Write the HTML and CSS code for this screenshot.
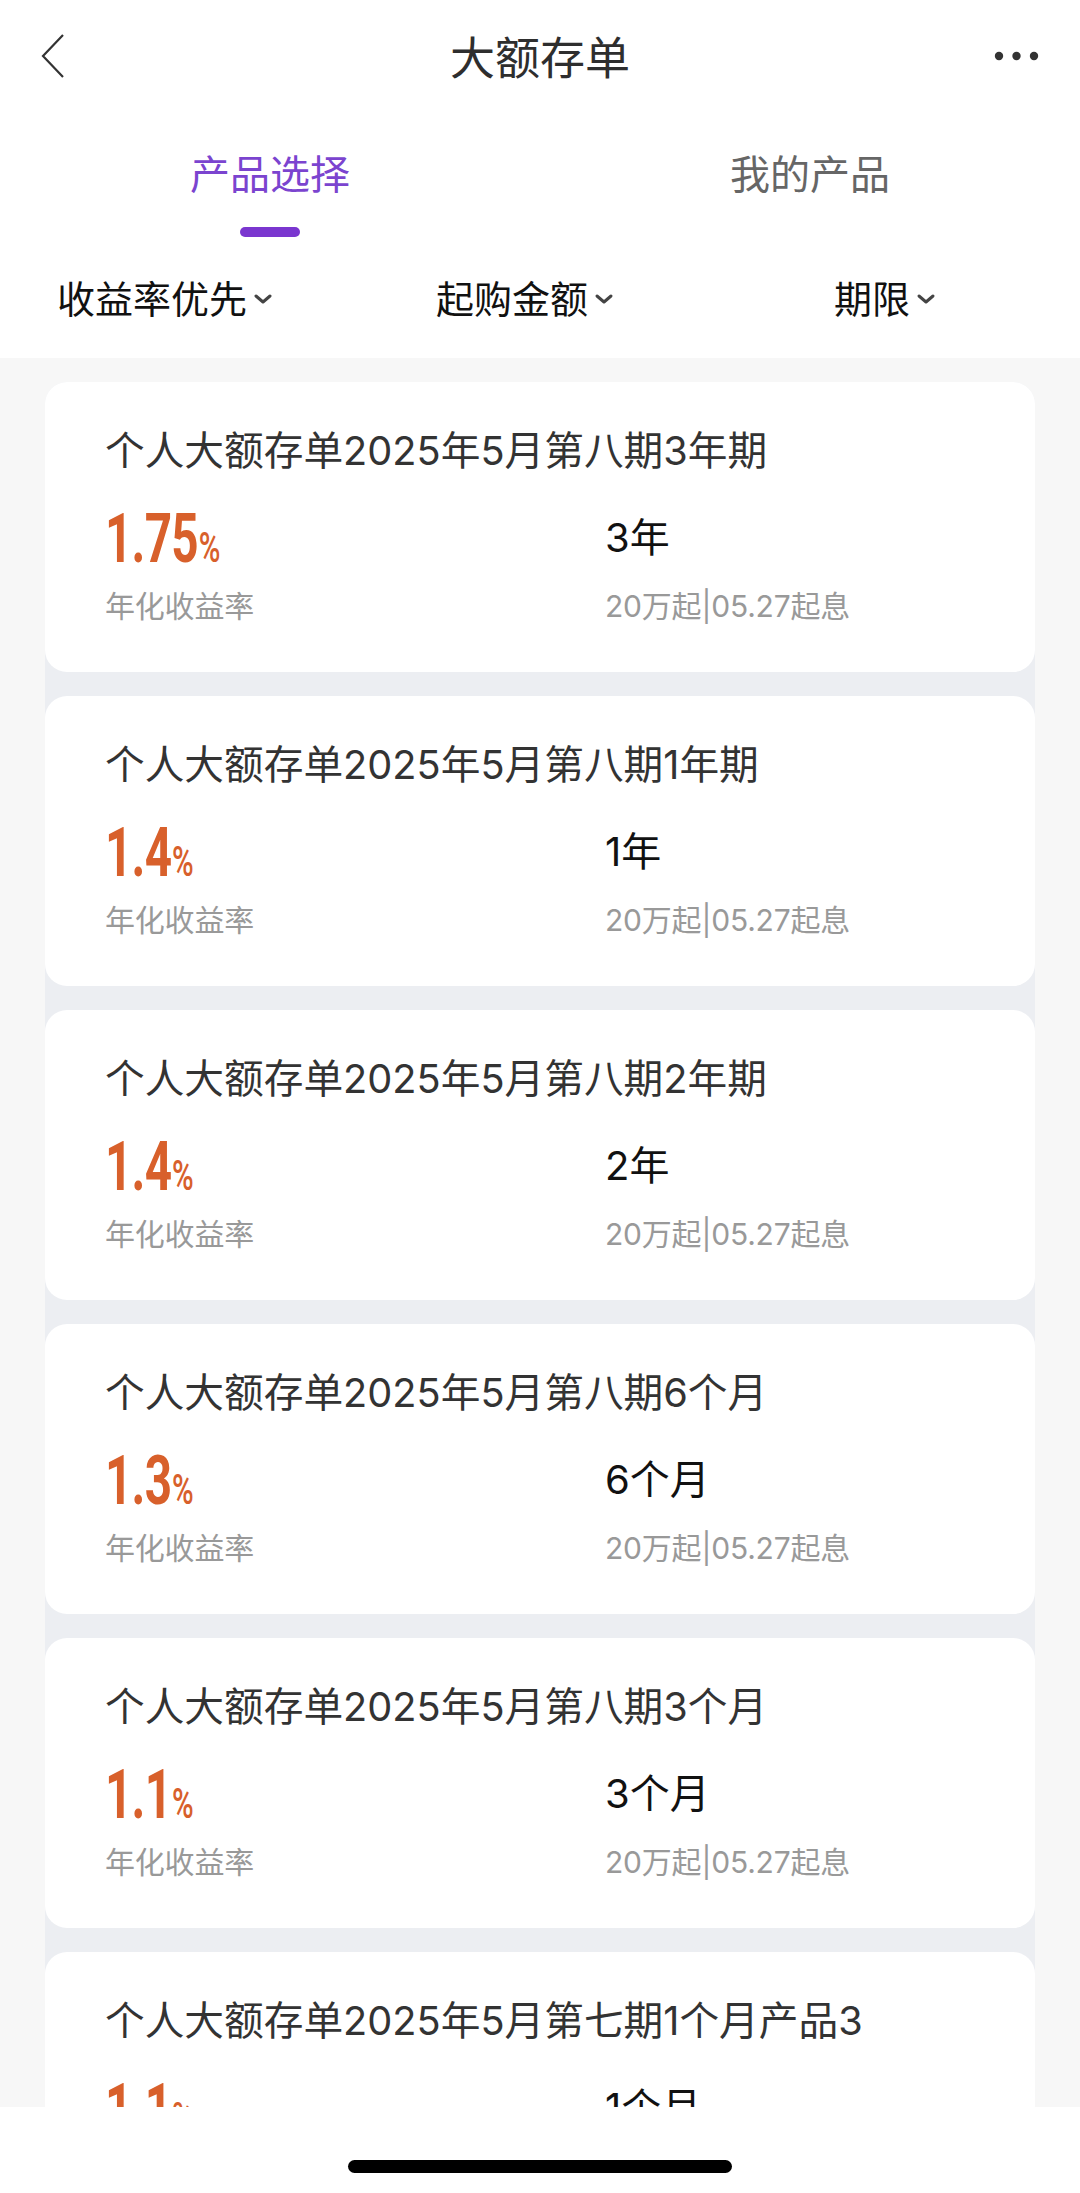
FILE: index.html
```html
<!DOCTYPE html>
<html lang="zh-CN">
<head>
<meta charset="utf-8">
<title>大额存单</title>
<link rel="stylesheet" href="styles.css">
</head>
<body>
<div class="screen">
  <div class="top">
    <div class="nav">
      <div class="nav-left">
        <svg class="back" width="24" height="46" viewBox="0 0 24 46"><polyline points="22,2 2,23 22,44" fill="none" stroke="#333" stroke-width="2.2" stroke-linejoin="miter"/></svg>
      </div>
      <div class="nav-title">大额存单</div>
      <div class="nav-right">
        <svg width="46" height="10" viewBox="0 0 46 10"><circle cx="5" cy="5" r="4.2" fill="#333"/><circle cx="22.5" cy="5" r="4.2" fill="#333"/><circle cx="40" cy="5" r="4.2" fill="#333"/></svg>
      </div>
    </div>
    <div class="tabs">
      <div class="tab active"><span class="tab-text">产品选择</span><span class="tab-bar"></span></div>
      <div class="tab"><span class="tab-text">我的产品</span><span class="tab-bar"></span></div>
    </div>
    <div class="filters">
      <div class="filter"><span>收益率优先</span><svg class="caret" width="20" height="12" viewBox="0 0 20 12"><polyline points="3,3 10,9 17,3" fill="none" stroke="#444" stroke-width="3" stroke-linecap="round" stroke-linejoin="round"/></svg></div>
      <div class="filter"><span>起购金额</span><svg class="caret" width="20" height="12" viewBox="0 0 20 12"><polyline points="3,3 10,9 17,3" fill="none" stroke="#444" stroke-width="3" stroke-linecap="round" stroke-linejoin="round"/></svg></div>
      <div class="filter"><span>期限</span><svg class="caret" width="20" height="12" viewBox="0 0 20 12"><polyline points="3,3 10,9 17,3" fill="none" stroke="#444" stroke-width="3" stroke-linecap="round" stroke-linejoin="round"/></svg></div>
    </div>
  </div>

  <div class="list">
    <div class="card">
      <div class="card-title">个人大额存单2025年5月第八期3年期</div>
      <div class="card-grid">
        <div class="rate"><span class="rate-num">1.75<small>%</small></span></div>
        <div class="term">3年</div>
        <div class="label">年化收益率</div>
        <div class="label">20万起|05.27起息</div>
      </div>
    </div>
    <div class="card">
      <div class="card-title">个人大额存单2025年5月第八期1年期</div>
      <div class="card-grid">
        <div class="rate"><span class="rate-num">1.4<small>%</small></span></div>
        <div class="term">1年</div>
        <div class="label">年化收益率</div>
        <div class="label">20万起|05.27起息</div>
      </div>
    </div>
    <div class="card">
      <div class="card-title">个人大额存单2025年5月第八期2年期</div>
      <div class="card-grid">
        <div class="rate"><span class="rate-num">1.4<small>%</small></span></div>
        <div class="term">2年</div>
        <div class="label">年化收益率</div>
        <div class="label">20万起|05.27起息</div>
      </div>
    </div>
    <div class="card">
      <div class="card-title">个人大额存单2025年5月第八期6个月</div>
      <div class="card-grid">
        <div class="rate"><span class="rate-num">1.3<small>%</small></span></div>
        <div class="term">6个月</div>
        <div class="label">年化收益率</div>
        <div class="label">20万起|05.27起息</div>
      </div>
    </div>
    <div class="card">
      <div class="card-title">个人大额存单2025年5月第八期3个月</div>
      <div class="card-grid">
        <div class="rate"><span class="rate-num">1.1<small>%</small></span></div>
        <div class="term">3个月</div>
        <div class="label">年化收益率</div>
        <div class="label">20万起|05.27起息</div>
      </div>
    </div>
    <div class="card">
      <div class="card-title">个人大额存单2025年5月第七期1个月产品3</div>
      <div class="card-grid">
        <div class="rate"><span class="rate-num">1.1<small>%</small></span></div>
        <div class="term">1个月</div>
        <div class="label">年化收益率</div>
        <div class="label">20万起|05.27起息</div>
      </div>
    </div>
  </div>

  <div class="home-bar"><span class="home-indicator"></span></div>
</div>
</body>
</html>
```

FILE: styles.css
```css
* { box-sizing: border-box; }
html, body { margin: 0; padding: 0; }
body {
  font-family: "Inter", "Noto Sans CJK SC", sans-serif;
  background: #f7f7f7;
  color: #333;
}
.screen {
  position: relative;
  width: 1080px;
  height: 2193px;
  overflow: hidden;
  background: #f7f7f7;
}
.top { background: #fff; }

.nav {
  height: 112px;
  display: grid;
  grid-template-columns: 1fr auto 1fr;
  align-items: center;
}
.nav-left { padding-left: 41px; display: flex; align-items: center; }
.nav-right { padding-right: 40px; display: flex; justify-content: flex-end; align-items: center; }
.nav-title {
  font-size: 45px;
  line-height: 56px;
  color: #2e2e2e;
  font-family: "Noto Sans CJK SC", sans-serif;
}

.tabs {
  display: grid;
  grid-template-columns: 1fr 1fr;
  padding-top: 36px;
}
.tab {
  display: flex;
  flex-direction: column;
  align-items: center;
}
.tab-text {
  font-size: 40px;
  line-height: 48px;
  color: #666;
  font-family: "Noto Sans CJK SC", sans-serif;
}
.tab-bar {
  width: 60px;
  height: 10px;
  border-radius: 5px;
  margin-top: 31px;
  background: transparent;
}
.tab.active .tab-text { color: #7b44cf; }
.tab.active .tab-bar { background: #7a36cf; }

.filters {
  display: grid;
  grid-template-columns: 1fr 1fr 1fr;
  padding-top: 37px;
  padding-bottom: 38px;
}
.filter {
  display: flex;
  justify-content: center;
  align-items: center;
  padding-right: 30px;
  font-size: 38px;
  line-height: 46px;
  color: #111;
  font-family: "Noto Sans CJK SC", sans-serif;
}
.caret { margin-left: 6px; margin-top: 4px; }

.list {
  margin: 24px 45px 0;
  background: #eceef2;
  border-radius: 22px;
  display: flex;
  flex-direction: column;
  gap: 24px;
}
.card {
  background: #fff;
  border-radius: 22px;
  height: 290px;
  padding: 45px 60px 0;
}
.card-title {
  font-size: 39.7px;
  line-height: 48px;
  color: #333;
  white-space: nowrap;
}
.card-grid {
  margin-top: 30px;
  display: grid;
  grid-template-columns: 500px 1fr;
  grid-template-rows: 68px 36px;
  row-gap: 15px;
  align-items: center;
}
.rate {
  height: 68px;
  line-height: 68px;
}
.rate-num {
  display: inline-block;
  font-family: "Roboto", sans-serif;
  font-weight: 700;
  font-size: 68px;
  line-height: 68px;
  color: #d8602b;
  transform: scaleX(0.7);
  transform-origin: 0 50%;
  letter-spacing: -1px;
}
.rate-num small {
  font-size: 42px;
  font-weight: 500;
  letter-spacing: 0;
  margin-left: 1px;
}
.term {
  font-size: 40px;
  line-height: 48px;
  color: #111;
  margin-top: -2px;
}
.label {
  font-size: 30px;
  line-height: 36px;
  color: #999;
  white-space: nowrap;
  letter-spacing: -0.2px;
}

.home-bar {
  position: absolute;
  left: 0;
  right: 0;
  bottom: 0;
  height: 86px;
  background: #fff;
  display: flex;
  justify-content: center;
}
.home-indicator {
  margin-top: 53px;
  width: 384px;
  height: 13px;
  border-radius: 7px;
  background: #000;
}
```
